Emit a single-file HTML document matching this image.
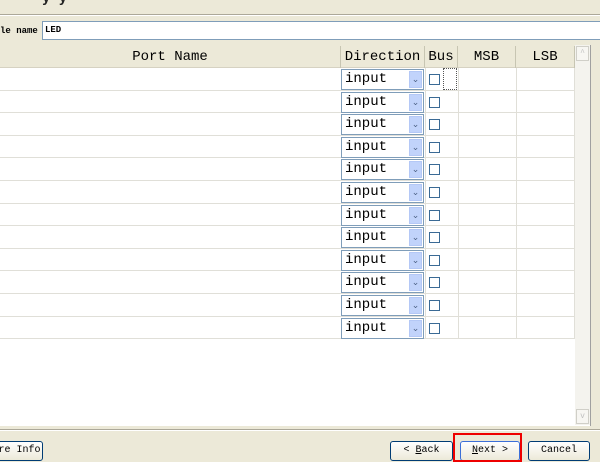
<!DOCTYPE html><html><head><style>
*{margin:0;padding:0;box-sizing:border-box}
body{width:600px;height:462px;background:#ece9d8;position:relative;overflow:hidden;font-family:"Liberation Mono",monospace}
.a{position:absolute}
.sel{position:absolute;left:341px;width:83px;height:21px;border:1px solid #7f9db9;background:#fff;font-size:14px;line-height:19px;padding-left:3px;color:#000}
.sel i{position:absolute;right:1px;top:1px;width:13px;height:17px;background:#c1d3fb;border:1px solid #b4c8f6;font-style:normal;font-size:9px;line-height:16px;text-align:center;color:#4d6185}
.cb{position:absolute;left:429px;width:11px;height:11px;border:1px solid #3a6a95;background:#fff}
.btn{position:absolute;top:441px;height:20px;border:1px solid #003c74;border-radius:3px;background:linear-gradient(#fff,#ece9d8);font-size:10px;line-height:18px;text-align:center}
.h{position:absolute;top:46px;height:22px;font-size:14px;line-height:22px;text-align:center;border-right:1px solid #c7c5b2}
</style></head><body>
<div class="a" style="left:0;top:-9px;font-size:14px;font-weight:bold;color:#222">&nbsp;&nbsp;&nbsp;&nbsp;&nbsp;y y</div>
<div class="a" style="left:0;top:14px;width:600px;height:1px;background:#aca899"></div>
<div class="a" style="left:0;top:15px;width:600px;height:1px;background:#fff"></div>
<div class="a" style="left:0;top:26px;font-size:9px;font-weight:bold">le name</div>
<div class="a" style="left:42px;top:21px;width:560px;height:19px;border:1px solid #7f9db9;background:#fff;font-size:9px;font-weight:bold;padding:3px 2px">LED</div>
<div class="a" style="left:0;top:45px;width:591px;height:381px;background:#fff;border-right:1px solid #a0a0a0"></div>
<div class="a" style="left:0;top:45px;width:575px;height:23px;background:#ece9d8;border-bottom:1px solid #d6d2c2"></div>
<div class="h" style="left:0;width:341px">Port Name</div>
<div class="h" style="left:341px;width:84px">Direction</div>
<div class="h" style="left:425px;width:33px">Bus</div>
<div class="h" style="left:458px;width:58px">MSB</div>
<div class="h" style="left:516px;width:59px">LSB</div>
<div class="a" style="left:575px;top:45px;width:15px;height:380px;background:#f4f3ee"></div>
<div class="a" style="left:576px;top:46px;width:13px;height:15px;border:1px solid #d0cfc8;background:#f7f6f2;font-size:8px;color:#c0c0c0;text-align:center;line-height:13px">^</div>
<div class="a" style="left:576px;top:409px;width:13px;height:15px;border:1px solid #d0cfc8;background:#f7f6f2;font-size:8px;color:#c0c0c0;text-align:center;line-height:13px">v</div>
<div id="rows"></div>
<div class="a" style="left:443px;top:68px;width:14px;height:22px;border:1px dotted #555"></div>
<div class="a" style="left:0;top:429px;width:600px;height:1px;background:#aca899"></div>
<div class="a" style="left:0;top:430px;width:600px;height:1px;background:#fff"></div>
<div class="btn" style="left:-4px;width:47px">re Info</div>
<div class="btn" style="left:390px;width:63px">&lt; <u>B</u>ack</div>
<div class="btn" style="left:460px;width:60px;border-color:#3c6fd8"><u>N</u>ext &gt;</div>
<div class="a" style="left:453px;top:433px;width:69px;height:29px;border:2px solid #e00"></div>
<div class="btn" style="left:528px;width:62px">Cancel</div>
<script>
var h='';for(var i=0;i<12;i++){var t=68+i*22.6;
h+='<div class="a" style="left:0;top:'+(t+21.6)+'px;width:575px;height:1px;background:#e0dfd8"></div>';
h+='<div class="sel" style="top:'+(t+1)+'px">input<i>&#8964;</i></div>';
h+='<div class="cb" style="top:'+(t+6)+'px"></div>';}
h+='<div class="a" style="left:425px;top:68px;width:1px;height:271px;background:#e0dfd8"></div><div class="a" style="left:458px;top:68px;width:1px;height:271px;background:#e0dfd8"></div><div class="a" style="left:516px;top:68px;width:1px;height:271px;background:#e0dfd8"></div><div class="a" style="left:574px;top:68px;width:1px;height:271px;background:#e0dfd8"></div>';
document.getElementById('rows').innerHTML=h;
</script>
</body></html>
